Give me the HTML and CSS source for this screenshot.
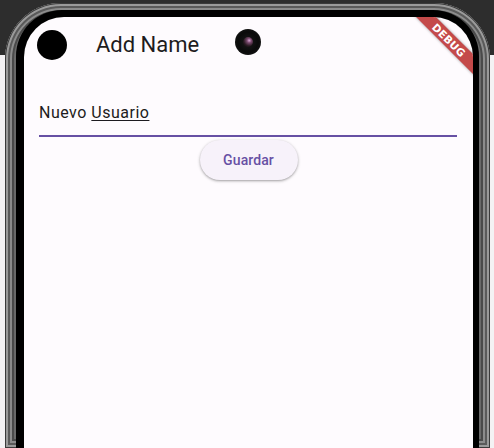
FILE: index.html
```html
<!DOCTYPE html>
<html>
<head>
<meta charset="utf-8">
<link rel="stylesheet" href="styles.css">
</head>
<body>
<div class="desk">
  <div class="phone">
    <div class="bezel">
      <div class="screen">
        <div class="appbar">
          <div class="dot"></div>
          <div class="title">Add Name</div>
        </div>
        <div class="field">
          <span class="value">Nuevo <span class="spell">Usuario</span></span>
        </div>
        <div class="actions">
          <button class="btn">Guardar</button>
        </div>
        <div class="camera"><div class="lens"></div></div>
        <div class="banner">DEBUG</div>
      </div>
    </div>
  </div>
</div>
</body>
</html>
```
FILE: styles.css
```css
html, body {
  margin: 0;
  padding: 0;
  width: 494px;
  height: 448px;
  overflow: hidden;
}
body {
  background: linear-gradient(to bottom, #2d2d2d 0, #2d2d2d 55px, #f4f2f4 55px, #f4f2f4 100%);
  font-family: Roboto, "Noto Sans", sans-serif;
}
.desk {
  padding: 3px 4px 0 5px;
}
.phone {
  width: 485px;
  height: 445px;
  box-sizing: border-box;
  padding: 7px 11px 0 11px;
  border-radius: 56px 56px 0 0;
  background: #6a6a6a;
  box-shadow: inset 0 0 0 1px #3a3a3a, inset 0 0 0 3px #9a9a9a, inset 0 0 0 5px #5a5a5a, inset 0 0 0 7px #8c8c8c, inset 0 0 0 9px #4a4a4a;
}
.bezel {
  height: 100%;
  box-sizing: border-box;
  padding: 7px 6px 0 8px;
  background: #000;
  border-radius: 46px 46px 0 0;
}
.screen {
  position: relative;
  height: 100%;
  background: #fefbfe;
  border-radius: 40px 40px 0 0;
  overflow: hidden;
}
.appbar {
  display: flex;
  align-items: center;
  height: 56px;
  padding-left: 13px;
}
.dot {
  width: 30px;
  height: 30px;
  border-radius: 50%;
  background: #000;
}
.title {
  margin-left: 29px;
  font-size: 22px;
  line-height: 28px;
  color: #1d1b20;
}
.field {
  margin: 28px 16px 0 15px;
  padding-bottom: 10px;
  border-bottom: 2px solid #6750a4;
}
.value {
  display: block;
  font-size: 16px;
  line-height: 24px;
  letter-spacing: 0.5px;
  color: #1d1b20;
}
.spell {
  text-decoration: underline;
  text-decoration-thickness: 1px;
  text-underline-offset: 2px;
}
.actions {
  display: flex;
  justify-content: center;
  margin-top: 3px;
}
.btn {
  width: 98px;
  height: 40px;
  border: none;
  border-radius: 20px;
  background: #f7f2fa;
  color: #6750a4;
  font-family: Roboto, "Noto Sans", sans-serif;
  font-size: 14px;
  font-weight: 500;
  letter-spacing: 0.1px;
  box-shadow: 0 1px 2px rgba(0,0,0,0.25), 0 1px 3px 1px rgba(0,0,0,0.1);
}
.camera {
  position: absolute;
  left: 211px;
  top: 12px;
  width: 26px;
  height: 26px;
  border-radius: 50%;
  background: radial-gradient(circle at 50% 50%, #1a1a1a 0, #0a0a0a 55%, #111 70%, #000 100%);
  display: flex;
  align-items: center;
  justify-content: center;
}
.lens {
  width: 10px;
  height: 10px;
  border-radius: 50%;
  background: radial-gradient(circle at 62% 35%, #d9a8d6 0, #7a4a6e 25%, #2a1a22 60%, #050505 100%);
}
.banner {
  position: absolute;
  left: 365px;
  top: 16px;
  width: 120px;
  height: 14px;
  line-height: 14px;
  transform: rotate(45deg);
  background: #c44a4a;
  color: #fff;
  font-family: "DejaVu Sans", sans-serif;
  font-size: 10.5px;
  font-weight: bold;
  text-align: center;
  letter-spacing: 0.2px;
  box-shadow: 0 0 3px rgba(0,0,0,0.4);
}
```
